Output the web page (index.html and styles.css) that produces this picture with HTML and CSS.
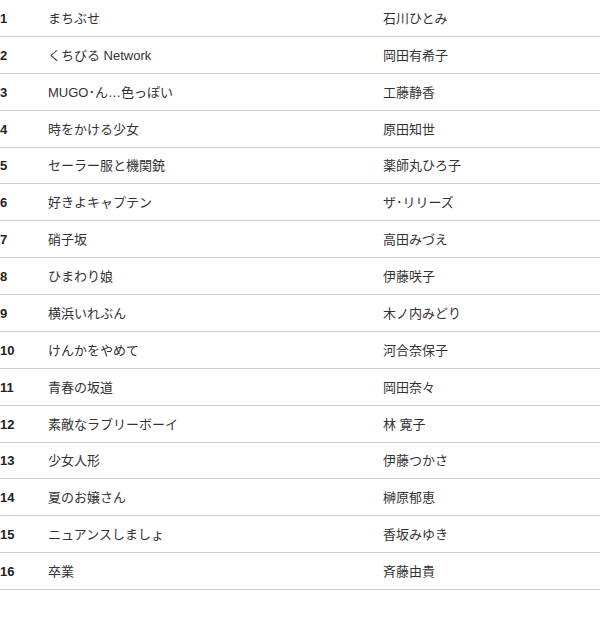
FILE: index.html
```html
<!DOCTYPE html>
<html lang="ja">
<head>
<meta charset="utf-8">
<link rel="stylesheet" href="styles.css">
</head>
<body>
<div class="list">
  <div class="row"><span class="num">1</span><span class="title">まちぶせ</span><span class="artist">石川ひとみ</span></div>
  <div class="row"><span class="num">2</span><span class="title">くちびる Network</span><span class="artist">岡田有希子</span></div>
  <div class="row"><span class="num">3</span><span class="title">MUGO･ん…色っぽい</span><span class="artist">工藤静香</span></div>
  <div class="row"><span class="num">4</span><span class="title">時をかける少女</span><span class="artist">原田知世</span></div>
  <div class="row"><span class="num">5</span><span class="title">セーラー服と機関銃</span><span class="artist">薬師丸ひろ子</span></div>
  <div class="row"><span class="num">6</span><span class="title">好きよキャプテン</span><span class="artist">ザ･リリーズ</span></div>
  <div class="row"><span class="num">7</span><span class="title">硝子坂</span><span class="artist">高田みづえ</span></div>
  <div class="row"><span class="num">8</span><span class="title">ひまわり娘</span><span class="artist">伊藤咲子</span></div>
  <div class="row"><span class="num">9</span><span class="title">横浜いれぶん</span><span class="artist">木ノ内みどり</span></div>
  <div class="row"><span class="num">10</span><span class="title">けんかをやめて</span><span class="artist">河合奈保子</span></div>
  <div class="row"><span class="num">11</span><span class="title">青春の坂道</span><span class="artist">岡田奈々</span></div>
  <div class="row"><span class="num">12</span><span class="title">素敵なラブリーボーイ</span><span class="artist">林 寛子</span></div>
  <div class="row"><span class="num">13</span><span class="title">少女人形</span><span class="artist">伊藤つかさ</span></div>
  <div class="row"><span class="num">14</span><span class="title">夏のお嬢さん</span><span class="artist">榊原郁恵</span></div>
  <div class="row"><span class="num">15</span><span class="title">ニュアンスしましょ</span><span class="artist">香坂みゆき</span></div>
  <div class="row"><span class="num">16</span><span class="title">卒業</span><span class="artist">斉藤由貴</span></div>
</div>
</body>
</html>
```

FILE: styles.css
```css
html, body {
  margin: 0;
  padding: 0;
  background: #fff;
}
body {
  font-family: "Liberation Sans", "Noto Sans CJK JP", sans-serif;
  font-size: 13px;
  line-height: 16px;
  color: #333;
  width: 600px;
}
.list {
  display: flex;
  flex-direction: column;
}
.row {
  display: grid;
  grid-template-columns: 48px 335px 1fr;
  align-items: baseline;
  align-content: center;
  height: 36.875px;
  padding-top: 2px;
  box-sizing: border-box;
  border-bottom: 1px solid #cfcfcf;
}
.num {
  font-weight: bold;
  color: #222;
}
.title, .artist {
  color: #333;
}
```
